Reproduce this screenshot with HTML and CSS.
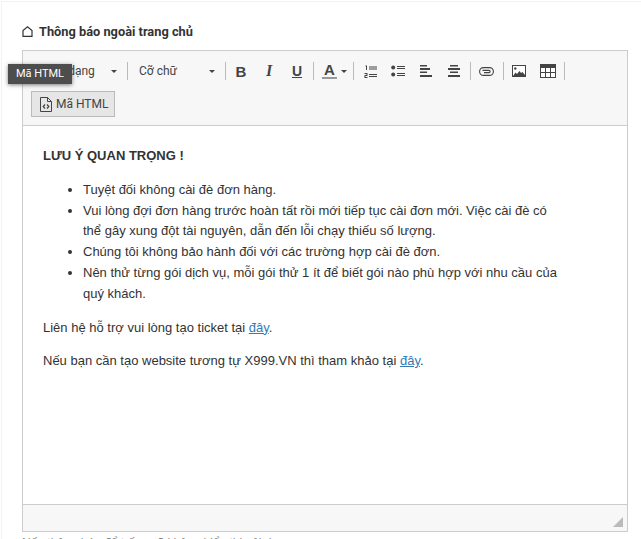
FILE: index.html
```html
<!doctype html>
<html>
<head>
<meta charset="utf-8">
<title>Thông báo ngoài trang chủ</title>
<link rel="stylesheet" href="styles.css">
</head>
<body>

<div class="card">
  <label class="title">
    <svg class="home" width="11" height="11" viewBox="0 0 11 11"><path d="M1 10.400V4.500L5.500 .8 10 4.500V10.400Z" fill="none" stroke="#333" stroke-width="1.200"/></svg>
    Thông báo ngoài trang chủ
  </label>

  <div class="editor">
    <div class="toolbar">
      <div class="row">
        <div class="drop format">Định dạng<i class="caret"></i></div>
        <b class="sep"></b>
        <div class="drop size">Cỡ chữ<i class="caret"></i></div>
        <b class="sep"></b>
        <div class="ico txt bold">B</div>
        <div class="ico txt ital">I</div>
        <div class="ico txt under">U</div>
        <b class="sep"></b>
        <div class="ico color"><span>A</span><i class="caret"></i></div>
        <b class="sep"></b>
        <div class="ico first">
          <svg width="13" height="13" viewBox="0 0 13 13" fill="#444"><path d="M1.500 .5h1.500v4.500H2V1.500H1.500zM.5 8h3v3H1.500v1h2v1H.5v-3h2V9h-2zM5 1.500h8v1H5zM5 3.500h8v1H5zM5 9h8v1H5zM5 11h8v1H5z"/></svg>
        </div>
        <div class="ico">
          <svg width="14" height="12" viewBox="0 0 14 12" fill="#444"><circle cx="2.200" cy="2.500" r="2"/><circle cx="2.200" cy="9.500" r="2"/><path d="M6 1h8v1H6zM6 3h8v1H6zM6 8h8v1H6zM6 10h8v1H6z"/></svg>
        </div>
        <div class="ico">
          <svg width="12" height="12" viewBox="0 0 12 12" fill="#444"><path d="M0 0h7v1.500H0zM0 3h10v2H0zM0 6.500h7v1.500H0zM0 10h12v2H0z"/></svg>
        </div>
        <div class="ico">
          <svg width="12" height="12" viewBox="0 0 12 12" fill="#444"><path d="M2 0h8v1.500H2zM0 3h12v2H0zM2 6.500h8v1.500H2zM0 10h12v2H0z"/></svg>
        </div>
        <b class="sep"></b>
        <div class="ico link">
          <svg width="15" height="9" viewBox="0 0 15 9" fill="none" stroke="#444" stroke-width="1.100"><rect x=".6" y=".6" width="13.800" height="7.800" rx="3.900"/><path d="M3.500 3.400h6.500a1 1 0 0 1 0 2.200H5"/></svg>
        </div>
        <b class="sep"></b>
        <div class="ico pic">
          <svg width="14" height="12" viewBox="0 0 14 12"><rect x=".5" y=".5" width="13" height="11" fill="#fff" stroke="#444"/><circle cx="3.300" cy="3.500" r="1.200" fill="#444"/><path d="M1 11 3.500 7.500 5 9 7.500 6 9 8 10.500 7 13 10V11Z" fill="#444"/></svg>
        </div>
        <div class="ico pic">
          <svg width="16" height="14" viewBox="0 0 16 14"><rect x=".5" y=".5" width="15" height="13" fill="#fff" stroke="#444"/><path d="M0 0h16v4H0z" fill="#444"/><path d="M5.500 4v10M10.500 4v10M0 8.500h16" stroke="#444" fill="none"/></svg>
        </div>
        <b class="sep"></b>
      </div>
      <div class="row">
        <div class="html-btn">
          <svg width="12" height="15" viewBox="0 0 12 15" fill="none" stroke="#444"><path d="M.5.5H7.500L11.500 4.500V14.500H.5Z"/><path d="M7.500.5V4.500H11.500"/><path d="M5 7.500 3.200 9.500 5 11.500M7 7.500 8.800 9.500 7 11.500" stroke-width="1.200"/></svg>
          Mã HTML
        </div>
      </div>
    </div>

    <div class="content">
      <p class="strong">LƯU Ý QUAN TRỌNG !</p>
      <ul>
        <li>Tuyệt đối không cài đè đơn hàng.</li>
        <li>Vui lòng đợi đơn hàng trước hoàn tất rồi mới tiếp tục cài đơn mới. Việc cài đè có thể gây xung đột tài nguyên, dẫn đến lỗi chạy thiếu số lượng.</li>
        <li>Chúng tôi không bảo hành đối với các trường hợp cài đè đơn.</li>
        <li>Nên thử từng gói dịch vụ, mỗi gói thử 1 ít để biết gói nào phù hợp với nhu cầu của quý khách.</li>
      </ul>
      <p>Liên hệ hỗ trợ vui lòng tạo ticket tại <a href="#">đây</a>.</p>
      <p>Nếu bạn cần tạo website tương tự X999.VN thì tham khảo tại <a href="#">đây</a>.</p>
    </div>

    <div class="status"><i class="grip"></i></div>
  </div>
  <small class="hint">Nếu thông báo để trống sẽ không hiển thị nội dung</small>
</div>

<div class="tooltip">Mã HTML</div>

</body>
</html>
```

FILE: styles.css
```css
html, body {
	height: 539px;
	overflow: hidden;
}

body {
	margin: 0;
	background: #fff;
	font-family: "Liberation Sans", Arial, sans-serif;
	color: #333;
	position: relative;
}

.card {
	margin: 1px 0 0 1px;
	border: 1px solid #f2f2f2;
	border-right: none;
	border-bottom: none;
	padding: 21px 13px 0 20px;
}

.title {
	display: flex;
	align-items: center;
	gap: 6px;
	height: 16px;
	margin-bottom: 11px;
	font-family: Roboto, sans-serif;
	font-size: 12.800px;
	font-weight: bold;
	color: #333;
}

.editor {
	border: 1px solid #ccc;
	height: 480px;
	display: flex;
	flex-direction: column;
}

.toolbar {
	box-sizing: border-box;
	height: 75px;
	background: #f7f7f7;
	border-bottom: 1px solid #ccc;
	padding: 11px 0 0 8px;
}

.row {
	display: flex;
	align-items: center;
	height: 18px;
	font-family: Roboto, sans-serif;
	font-size: 12px;
	color: #444;
}

.row + .row {
	height: 26px;
	margin-top: 11px;
}

.drop {
	display: flex;
	align-items: center;
	justify-content: space-between;
	box-sizing: border-box;
	width: 94px;
	padding: 0 8px 0 10px;
}

.caret {
	display: inline-block;
	border-top: 3px solid #444;
	border-left: 3px solid transparent;
	border-right: 3px solid transparent;
}

.sep {
	flex: none;
	width: 1px;
	height: 18px;
	margin: 0 1px 0 2px;
	background: #bbb;
}

.ico {
	flex: none;
	width: 28px;
	display: flex;
	align-items: center;
	justify-content: center;
}

.ico.first {
	margin-left: 1px;
}

.ico.link {
	width: 29px;
}

.ico.pic {
	width: 28.500px;
}

.txt {
	font-family: "Liberation Sans", sans-serif;
	font-size: 14px;
	font-weight: bold;
}

.bold {
	font-size: 15px;
}

.ital {
	font-family: "Liberation Serif", serif;
	font-size: 16px;
	font-style: italic;
}

.under {
	text-decoration: underline;
}

.ico.color {
	width: 36px;
	justify-content: flex-start;
	gap: 4px;
	padding-left: 7px;
	box-sizing: border-box;
}

.color span {
	font-family: "Liberation Sans", sans-serif;
	font-size: 15px;
	font-weight: bold;
	line-height: 14px;
	border-bottom: 2px solid #999;
	padding: 0 2px;
}

.html-btn {
	display: flex;
	align-items: center;
	gap: 4px;
	box-sizing: border-box;
	width: 84px;
	height: 26px;
	padding-left: 8px;
	background: #e6e6e6;
	border: 1px solid #bbb;
}

.content {
	flex: 1;
	padding: 20px 20px 0;
	font-size: 13px;
	line-height: 1.6;
	color: #333;
}

.content p {
	margin: 0 0 13px;
}

.strong {
	font-weight: bold;
}

.content ul {
	margin: 13px 0;
	padding-left: 40px;
	padding-right: 40px;
}

.content a {
	color: #337ab7;
}

.status {
	height: 26px;
	background: #f7f7f7;
	border-top: 1px solid #ccc;
	position: relative;
}

.grip {
	position: absolute;
	right: 4px;
	bottom: 4px;
	width: 0;
	height: 0;
	border-left: 10px solid transparent;
	border-bottom: 10px solid #bbb;
}

.hint {
	display: block;
	margin-top: 4px;
	font-size: 12px;
	color: #888;
}

.tooltip {
	position: absolute;
	left: 8px;
	top: 64px;
	width: 64px;
	height: 20px;
	background: #4d4d4d;
	color: #fff;
	font-family: Roboto, sans-serif;
	font-size: 11px;
	line-height: 20px;
	text-align: center;
	box-shadow: 0 1px 4px rgba(0, 0, 0, 0.5);
}
```
